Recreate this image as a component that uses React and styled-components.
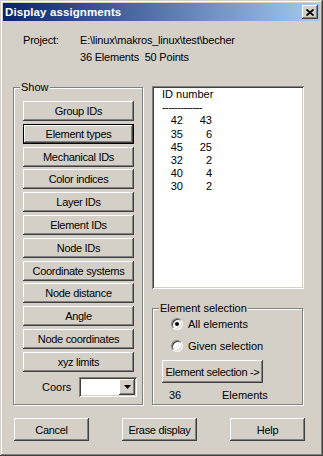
import React from "react";
import styled, { createGlobalStyle } from "styled-components";

const GlobalStyle = createGlobalStyle`
  html, body {
    margin: 0;
    padding: 0;
    background: #d4d0c8;
  }
  body {
    font-family: "Liberation Sans", Arial, sans-serif;
    font-size: 11px;
    color: #000;
  }
`;

const Window = styled.div`
  box-sizing: border-box;
  width: 323px;
  height: 456px;
  padding: 3px;
  background: #d4d0c8;
  display: flex;
  flex-direction: column;
  box-shadow: inset -1px -1px #404040, inset 1px 1px #d4d0c8,
    inset -2px -2px #808080, inset 2px 2px #fff;
`;

const TitleBar = styled.div`
  height: 18px;
  display: flex;
  align-items: center;
  justify-content: space-between;
  padding: 0 2px;
  background: linear-gradient(to right, #0a246a, #a6caf0);
`;

const Title = styled.span`
  color: #fff;
  font-weight: bold;
  font-size: 11.5px;
  letter-spacing: 0.1px;
`;

const CloseButton = styled.div`
  width: 16px;
  height: 14px;
  display: flex;
  align-items: center;
  justify-content: center;
  background: #d4d0c8;
  box-shadow: inset -1px -1px #404040, inset 1px 1px #fff,
    inset -2px -2px #808080;
`;

const Content = styled.div`
  padding: 0 0 0 10px;
  display: flex;
  flex-direction: column;
`;

const ProjectInfo = styled.div`
  margin: 11px 0 0 10px;
  display: grid;
  grid-template-columns: 57px auto;
  line-height: 17px;
  letter-spacing: -0.2px;
`;

const MainRow = styled.div`
  margin-top: 20px;
  display: flex;
  gap: 9px;
  align-items: flex-start;
`;

const GroupBox = styled.div`
  position: relative;
  box-sizing: border-box;
  width: ${(p) => p.$width}px;
  height: ${(p) => p.$height}px;
  margin-top: ${(p) => p.$top || 0}px;
  border: 1px solid #808080;
  box-shadow: inset 1px 1px #fff, 1px 1px #fff;
`;

const Caption = styled.span`
  position: absolute;
  top: -8px;
  left: 6px;
  padding: 0 1px;
  background: #d4d0c8;
  line-height: 15px;
`;

const ButtonColumn = styled.div`
  padding: 13px 0 0 9px;
  display: flex;
  flex-direction: column;
  gap: 2.8px;
`;

const Button = styled.div`
  box-sizing: border-box;
  width: ${(p) => p.$width || 111}px;
  height: ${(p) => p.$height || 20}px;
  display: flex;
  align-items: center;
  justify-content: center;
  background: #d4d0c8;
  white-space: nowrap;
  letter-spacing: -0.3px;
  box-shadow: ${(p) =>
    p.$focused
      ? "inset 0 0 0 1px #000, inset -2px -2px #404040, inset 2px 2px #fff, inset -3px -3px #808080"
      : "inset -1px -1px #404040, inset 1px 1px #fff, inset -2px -2px #808080"};
`;

const CoorsRow = styled.div`
  margin: 5px 0 0 28px;
  display: flex;
  align-items: center;
  gap: 8px;
`;

const Combo = styled.div`
  box-sizing: border-box;
  width: 58px;
  height: 20px;
  padding: 2px;
  display: flex;
  justify-content: flex-end;
  background: #fff;
  box-shadow: inset 1px 1px #808080, inset -1px -1px #fff,
    inset 2px 2px #404040, inset -2px -2px #d4d0c8;
`;

const ComboArrow = styled.div`
  width: 16px;
  height: 16px;
  display: flex;
  align-items: center;
  justify-content: center;
  background: #d4d0c8;
  box-shadow: inset -1px -1px #404040, inset 1px 1px #fff,
    inset -2px -2px #808080;
`;

const RightColumn = styled.div`
  width: 152px;
  display: flex;
  flex-direction: column;
`;

const ListBox = styled.div`
  box-sizing: border-box;
  height: 203px;
  padding: 2px 0 0 10px;
  background: #fff;
  line-height: 13.2px;
  box-shadow: inset 1px 1px #808080, inset -1px -1px #fff,
    inset 2px 2px #404040, inset -2px -2px #d4d0c8;
`;

const Dashes = styled.div`
  letter-spacing: -0.6px;
`;

const IdRow = styled.div`
  display: grid;
  grid-template-columns: 21px 29px;
  text-align: right;
`;

const SelectionBody = styled.div`
  padding: 7px 0 0 9px;
  display: flex;
  flex-direction: column;
`;

const RadioRow = styled.div`
  height: 16px;
  margin: 0 0 6px 9px;
  display: flex;
  align-items: center;
  gap: 5px;
`;

const Radio = styled.div`
  box-sizing: border-box;
  width: 12px;
  height: 12px;
  border-radius: 50%;
  display: flex;
  align-items: center;
  justify-content: center;
  background: #fff;
  border: 1px solid;
  border-color: #808080 #fff #fff #808080;
  box-shadow: inset 1px 1px #404040, inset -1px -1px #d4d0c8;

  &::after {
    content: "";
    width: 4px;
    height: 4px;
    border-radius: 50%;
    background: ${(p) => (p.$checked ? "#000" : "transparent")};
  }
`;

const CountRow = styled.div`
  margin: 5px 0 0 7px;
  display: grid;
  grid-template-columns: 53px auto;
  line-height: 14px;
`;

const BottomRow = styled.div`
  margin: 13px 0 0 1px;
  display: flex;
  gap: 33px;
`;

const showItems = [
  "Group IDs",
  "Element types",
  "Mechanical IDs",
  "Color indices",
  "Layer IDs",
  "Element IDs",
  "Node IDs",
  "Coordinate systems",
  "Node distance",
  "Angle",
  "Node coordinates",
  "xyz limits",
];

const idRows = [
  [42, 43],
  [35, 6],
  [45, 25],
  [32, 2],
  [40, 4],
  [30, 2],
];

const App = () => {
  return (
    <>
      <GlobalStyle />
      <Window>
        <TitleBar>
          <Title>Display assignments</Title>
          <CloseButton>
            <svg width="8" height="7" viewBox="0 0 8 7">
              <path d="M0.5 0.5 L7.5 6.5 M7.5 0.5 L0.5 6.5" stroke="#000" strokeWidth="1.8" />
            </svg>
          </CloseButton>
        </TitleBar>
        <Content>
          <ProjectInfo>
            <span>Project:</span>
            <span>E:\linux\makros_linux\test\becher</span>
            <span />
            <span>36 Elements&nbsp;&nbsp;50 Points</span>
          </ProjectInfo>

          <MainRow>
            <GroupBox $width={130} $height={318} $top={1}>
              <Caption>Show</Caption>
              <ButtonColumn>
                {showItems.map((item) => (
                  <Button key={item} $focused={item === "Element types"}>
                    {item}
                  </Button>
                ))}
              </ButtonColumn>
              <CoorsRow>
                <span>Coors</span>
                <Combo>
                  <ComboArrow>
                    <svg width="7" height="4" viewBox="0 0 7 4">
                      <path d="M0 0 H7 L3.5 4 Z" fill="#000" />
                    </svg>
                  </ComboArrow>
                </Combo>
              </CoorsRow>
            </GroupBox>

            <RightColumn>
              <ListBox>
                <div>ID number</div>
                <Dashes>-------------</Dashes>
                {idRows.map(([a, b]) => (
                  <IdRow key={a}>
                    <span>{a}</span>
                    <span>{b}</span>
                  </IdRow>
                ))}
              </ListBox>
              <GroupBox $width={151} $height={97} $top={19}>
                <Caption>Element selection</Caption>
                <SelectionBody>
                  <RadioRow>
                    <Radio $checked />
                    <span>All elements</span>
                  </RadioRow>
                  <RadioRow>
                    <Radio />
                    <span>Given selection</span>
                  </RadioRow>
                  <Button $width={101} $height={23}>Element selection -&gt;</Button>
                  <CountRow>
                    <span>36</span>
                    <span>Elements</span>
                  </CountRow>
                </SelectionBody>
              </GroupBox>
            </RightColumn>
          </MainRow>

          <BottomRow>
            <Button $width={75} $height={23}>Cancel</Button>
            <Button $width={75} $height={23}>Erase display</Button>
            <Button $width={75} $height={23}>Help</Button>
          </BottomRow>
        </Content>
      </Window>
    </>
  );
};

export default App;
